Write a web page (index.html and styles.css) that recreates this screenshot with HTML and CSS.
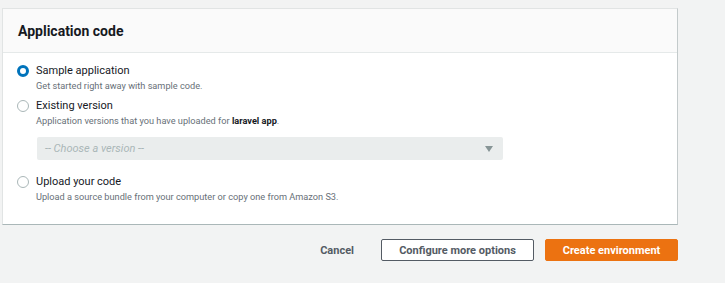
FILE: index.html
```html
<!DOCTYPE html>
<html lang="en">
<head>
    <meta charset="UTF-8">
    <title>Create environment - Application code</title>
    <link rel="stylesheet" href="styles.css">
</head>
<body>
    <div class="page">
        <div class="panel">
            <div class="panel-header">
                <h2>Application code</h2>
            </div>

            <div class="panel-body">
                <label class="radio-item">
                    <input type="radio" name="code" checked>
                    <span class="radio-mark"></span>
                    <span class="radio-text">
                        <span class="radio-label">Sample application</span>
                        <span class="radio-desc">Get started right away with sample code.</span>
                    </span>
                </label>

                <label class="radio-item">
                    <input type="radio" name="code">
                    <span class="radio-mark"></span>
                    <span class="radio-text">
                        <span class="radio-label">Existing version</span>
                        <span class="radio-desc">Application versions that you have uploaded for <b>laravel app</b>.</span>
                    </span>
                </label>

                <div class="select-box">
                    <span class="select-placeholder">-- Choose a version --</span>
                    <span class="select-arrow"></span>
                </div>

                <label class="radio-item upload">
                    <input type="radio" name="code">
                    <span class="radio-mark"></span>
                    <span class="radio-text">
                        <span class="radio-label">Upload your code</span>
                        <span class="radio-desc">Upload a source bundle from your computer or copy one from Amazon S3.</span>
                    </span>
                </label>
            </div>
        </div>

        <div class="actions">
            <button class="button link">Cancel</button>
            <button class="button normal">Configure more options</button>
            <button class="button primary">Create environment</button>
        </div>
    </div>
</body>
</html>
```

FILE: styles.css
```css
* {
    margin: 0;
    padding: 0;
    box-sizing: border-box;
}

body {
    font-family: Roboto, "Open Sans", sans-serif;
    background: #f2f3f3;
    color: #16191f;
}

.page {
    width: 676px;
    margin: 8px 0 0 2px;
}

.panel {
    background: white;
    border: 1px solid #e1e4e4;
    border-right-color: #c3cacb;
    border-bottom-color: #aab7b8;
}

.panel-header {
    background: #fafafa;
    border-bottom: 1px solid #e5e9e9;
    height: 44px;
    padding: 0 15px;
    display: flex;
    align-items: center;
}

.panel-header h2 {
    font-size: 14px;
    font-weight: 700;
    color: #16191f;
}

.panel-body {
    padding: 10px 14px 21px;
}

.radio-item {
    display: flex;
    align-items: flex-start;
    gap: 7px;
    cursor: pointer;
}

.radio-item + .radio-item {
    margin-top: 6px;
}

.radio-item.upload {
    margin-top: 14px;
}

.radio-item input {
    display: none;
}

.radio-mark {
    width: 12px;
    height: 12px;
    margin-top: 2px;
    border-radius: 50%;
    border: 1px solid #aab7b8;
    background: white;
    flex-shrink: 0;
}

.radio-item input:checked + .radio-mark {
    border: 3.5px solid #0073bb;
}

.radio-text {
    display: flex;
    flex-direction: column;
}

.radio-label {
    font-size: 11px;
    line-height: 16px;
    color: #16191f;
}

.radio-desc {
    font-size: 9.2px;
    line-height: 13px;
    color: #687078;
}

.radio-desc b {
    color: #16191f;
}

.select-box {
    margin: 10px 0 0 20px;
    width: 466px;
    height: 23px;
    background: #eaeded;
    border-radius: 2px;
    display: flex;
    align-items: center;
    justify-content: space-between;
    padding: 0 10px 0 8px;
}

.select-placeholder {
    font-size: 11px;
    font-style: italic;
    color: #aab7b8;
}

.select-arrow {
    width: 0;
    height: 0;
    border-left: 4px solid transparent;
    border-right: 4px solid transparent;
    border-top: 6px solid #879596;
}

.actions {
    display: flex;
    justify-content: flex-end;
    align-items: center;
    margin-top: 14px;
}

.button {
    font-family: inherit;
    font-size: 11px;
    font-weight: 700;
    height: 22px;
    border-radius: 2px;
    cursor: pointer;
}

.button.link {
    background: none;
    border: none;
    color: #545b64;
    padding: 0 16px;
    margin-right: 11px;
}

.button.normal {
    width: 153px;
    background: white;
    border: 1px solid #545b64;
    color: #545b64;
    margin-right: 11px;
}

.button.primary {
    width: 133px;
    background: #ec7211;
    border: 1px solid #ec7211;
    color: white;
}
```
